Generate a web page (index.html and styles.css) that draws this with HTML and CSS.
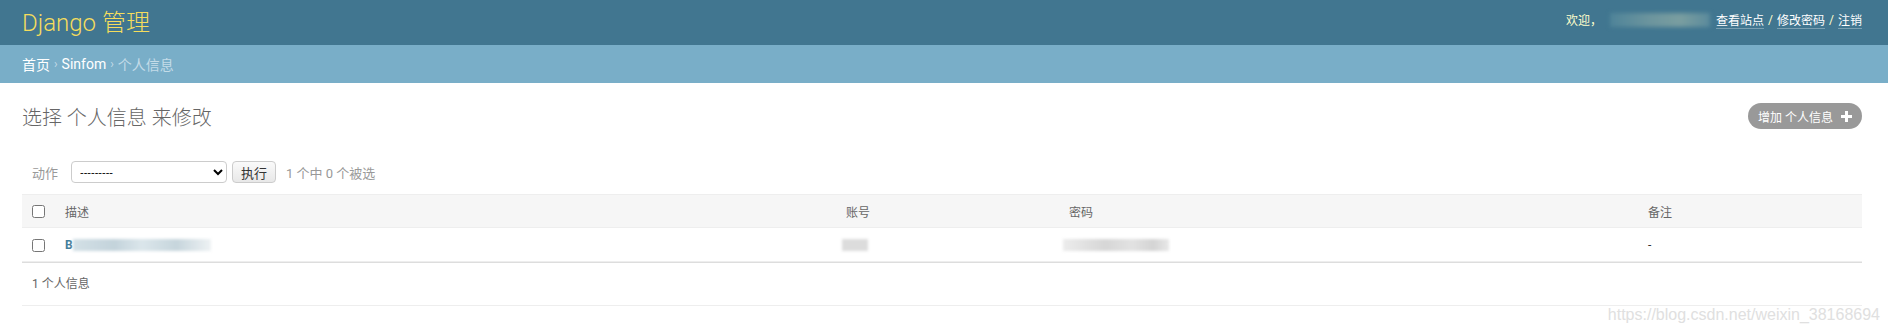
FILE: index.html
```html
<!DOCTYPE html>
<html lang="zh-CN">
<head>
  <meta charset="UTF-8">
  <title>选择 个人信息 来修改 | Django 站点管理员</title>
  <link rel="stylesheet" href="styles.css">
</head>
<body>
  <header class="site-header">
    <div class="branding">Django 管理</div>
    <div class="user-tools">
      欢迎，<span class="blur-name"></span><a href="#">查看站点</a> / <a href="#">修改密码</a> / <a href="#">注销</a>
    </div>
  </header>

  <nav class="breadcrumbs">
    <a href="#">首页</a><span class="sep">›</span><a href="#">Sinfom</a><span class="sep">›</span><span class="current">个人信息</span>
  </nav>

  <main class="content">
    <div class="title-row">
      <h1>选择 个人信息 来修改</h1>
      <a class="addlink" href="#">增加 个人信息
        <svg width="11" height="11" viewBox="0 0 11 11"><path d="M4 0h3v4h4v3H7v4H4V7H0V4h4z" fill="#fff"/></svg>
      </a>
    </div>

    <div class="actions">
      <label>动作</label>
      <select><option>---------</option></select>
      <button>执行</button>
      <span class="counter">1 个中 0 个被选</span>
    </div>

    <table class="results">
      <colgroup>
        <col class="c-check"><col class="c-desc"><col class="c-acct"><col class="c-pwd"><col>
      </colgroup>
      <thead>
        <tr>
          <th class="check"><input type="checkbox"></th>
          <th>描述</th>
          <th>账号</th>
          <th>密码</th>
          <th>备注</th>
        </tr>
      </thead>
      <tbody>
        <tr>
          <td class="check"><input type="checkbox"></td>
          <td><a class="row-link" href="#">B</a><span class="blur blur-desc"></span></td>
          <td><span class="blur blur-acct"></span></td>
          <td><span class="blur blur-pwd"></span></td>
          <td>-</td>
        </tr>
      </tbody>
    </table>

    <p class="paginator">1 个人信息</p>
  </main>

  <div class="watermark">https://blog.csdn.net/weixin_38168694</div>
</body>
</html>
```

FILE: styles.css
```css
body {
  margin: 0;
  font-family: Roboto, "Noto Sans CJK SC", sans-serif;
  color: #333;
  background: #fff;
}
a {
  text-decoration: none;
}
.site-header {
  height: 45px;
  background: #417690;
  display: flex;
  align-items: center;
  justify-content: space-between;
  padding: 0 26px 0 22px;
}
.branding {
  font-size: 24px;
  font-weight: 300;
  color: #f5dd5d;
  margin-top: -4px;
}
.user-tools {
  font-size: 12px;
  color: #ffc;
  display: flex;
  align-items: center;
  margin-top: -6px;
}
.user-tools a {
  color: #fff;
  border-bottom: 1px solid rgba(255,255,255,0.3);
  margin: 0 4px;
}
.user-tools a:last-child {
  margin-right: 0;
}
.blur-name {
  display: inline-block;
  width: 100px;
  height: 14px;
  margin: 0 2px 0 8px;
  background: linear-gradient(90deg, #4f8499, #6c959e 40%, #7a9ea0 70%, #5b8b9c);
  filter: blur(2px);
}
.breadcrumbs {
  height: 38px;
  background: #79aec8;
  display: flex;
  align-items: center;
  padding: 0 22px;
  font-size: 14px;
  color: #c4dce8;
}
.breadcrumbs a {
  color: #fff;
}
.breadcrumbs .sep {
  font-size: 12px;
  margin: 0 4px;
}
.content {
  padding: 0 26px 0 22px;
}
.title-row {
  display: flex;
  justify-content: space-between;
  align-items: flex-start;
  margin-top: 21px;
}
h1 {
  margin: 0;
  font-size: 20px;
  line-height: 28px;
  font-weight: 300;
  color: #666;
}
.addlink {
  display: flex;
  align-items: center;
  gap: 8px;
  height: 26px;
  padding: 0 10px;
  margin-top: -1px;
  border-radius: 13px;
  background: #999;
  color: #fff;
  font-size: 12px;
}
.actions {
  display: flex;
  align-items: center;
  height: 22px;
  margin-top: 29px;
  font-size: 13px;
}
.actions label {
  color: #999;
  margin: 0 13px 0 10px;
}
.actions select {
  width: 156px;
  height: 22px;
  border: 1px solid #ccc;
  border-radius: 4px;
  background: #fff;
  font-size: 11px;
  padding: 0 4px;
}
.actions button {
  height: 22px;
  width: 44px;
  margin-left: 5px;
  border: 1px solid #ccc;
  border-radius: 4px;
  background: linear-gradient(#fafafa, #e8e8e8);
  font-family: inherit;
  font-size: 13px;
  color: #333;
  padding: 0;
}
.counter {
  color: #999;
  margin-left: 10px;
}
.results {
  width: 100%;
  margin-top: 11px;
  border-collapse: collapse;
  table-layout: fixed;
  font-size: 12px;
}
.c-check { width: 35px; }
.c-desc { width: 781px; }
.c-acct { width: 223px; }
.c-pwd { width: 579px; }
.results thead th {
  height: 32px;
  background: #f6f6f6;
  border-top: 1px solid #eee;
  border-bottom: 1px solid #eee;
  text-align: left;
  font-weight: 400;
  color: #666;
  padding: 0 8px;
}
.results td {
  height: 33px;
  padding: 0 8px;
  border-bottom: 1px solid #eee;
  color: #333;
}
.results .check {
  padding: 0 0 0 10px;
}
.results input[type="checkbox"] {
  margin: 0;
  width: 13px;
  height: 13px;
  vertical-align: middle;
}
.row-link {
  color: #447e9b;
  font-weight: 700;
}
.blur {
  display: inline-block;
  height: 12px;
  vertical-align: middle;
  filter: blur(1.5px);
}
.blur-desc {
  width: 138px;
  background: linear-gradient(90deg, #d3e0e6, #c3d3db 30%, #dbe6eb 50%, #c6d5dc 75%, #eef2f4);
}
.blur-acct {
  width: 26px;
  margin-left: -4px;
  background: #dcdcdc;
}
.blur-pwd {
  width: 106px;
  margin-left: -6px;
  background: linear-gradient(90deg, #ececec, #d6d6d6 40%, #e2e2e2 65%, #d4d4d4 85%, #e8e8e8);
}
.paginator {
  margin: 0;
  height: 42px;
  line-height: 42px;
  border-top: 1px solid #ddd;
  border-bottom: 1px solid #eee;
  padding-left: 10px;
  font-size: 12px;
  color: #666;
}
.watermark {
  position: absolute;
  right: 8px;
  top: 306px;
  font-family: "Liberation Sans", Arial, sans-serif;
  font-size: 16px;
  color: #e0e0e0;
}
```
